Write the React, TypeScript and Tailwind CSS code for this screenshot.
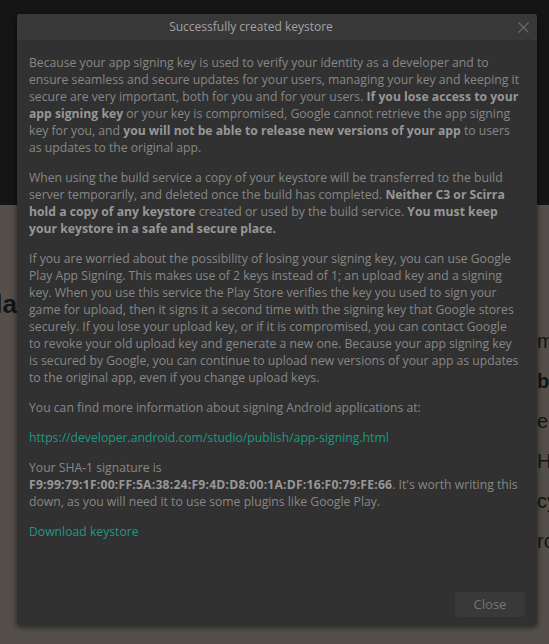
const font = { fontFamily: '"Open Sans", "Liberation Sans", sans-serif' };

const CloseIcon = () => (
  <svg viewBox="0 0 11 11" className="absolute right-[8px] top-[8px] w-[11px] h-[11px]">
    <path d="M0.5 0.5 L10.5 10.5 M10.5 0.5 L0.5 10.5" stroke="#686868" strokeWidth="1.3" fill="none" />
  </svg>
);

const KeystoreDialog = () => {
  return (
    <div
      className="absolute left-[17px] top-[14px] w-[520px] h-[611px] flex flex-col rounded-[3px] bg-[#313131] shadow-[0_2px_6px_rgba(0,0,0,0.6)]"
      style={font}
    >
      <div className="relative h-[26px] flex items-center justify-center pr-[52px] bg-[#383838] rounded-t-[3px]">
        <h2 className="text-[12px] text-[#a3a3a3]">Successfully created keystore</h2>
        <CloseIcon />
      </div>

      <div className="flex flex-col gap-[13px] px-3 pt-[14px] text-[12.2px] leading-[17px] text-[#878787] [&_b]:text-[#979797] [&_b]:font-bold">
        <p>
          Because your app signing key is used to verify your identity as a developer and to ensure seamless
          and secure updates for your users, managing your key and keeping it secure are very important, both
          for you and for your users. <b>If you lose access to your app signing key</b> or your key is
          compromised, Google cannot retrieve the app signing key for you, and{" "}
          <b>you will not be able to release new versions of your app</b> to users as updates to the original
          app.
        </p>
        <p>
          When using the build service a copy of your keystore will be transferred to the build server
          temporarily, and deleted once the build has completed. <b>Neither C3 or Scirra hold a copy of any
          keystore</b> created or used by the build service. <b>You must keep your keystore in a safe and secure
          place.</b>
        </p>
        <p>
          If you are worried about the possibility of losing your signing key, you can use Google Play App
          Signing. This makes use of 2 keys instead of 1; an upload key and a signing key. When you use this
          service the Play Store verifies the key you used to sign your game for upload, then it signs it a
          second time with the signing key that Google stores securely. If you lose your upload key, or if it
          is compromised, you can contact Google
          <br />
          to revoke your old upload key and generate a new one. Because your app signing key
          <br />
          is secured by Google, you can continue to upload new versions of your app as updates
          <br />
          to the original app, even if you change upload keys.
        </p>
        <p>You can find more information about signing Android applications at:</p>
        <p>
          <a href="#" className="text-[#1a9a82]">
            https://developer.android.com/studio/publish/app-signing.html
          </a>
        </p>
        <p>
          Your SHA-1 signature is <br />
          <b className="tracking-[0.2px]">F9:99:79:1F:00:FF:5A:38:24:F9:4D:D8:00:1A:DF:16:F0:79:FE:66</b>. It's
          worth writing this down, as you will need it to use some plugins like Google Play.
        </p>
        <p>
          <a href="#" className="text-[#1a9a82]">
            Download keystore
          </a>
        </p>
      </div>

      <div className="mt-auto flex justify-end px-3 pb-2">
        <button className="w-[70px] h-[25px] rounded-[3px] bg-[#393939] text-[13px] text-[#767676]">
          Close
        </button>
      </div>
    </div>
  );
};

export default function App() {
  return (
    <div className="relative w-[549px] h-[644px] overflow-hidden bg-[#545049]">
      <div className="h-[205px] bg-[#151515]" />
      <div className="flex justify-between" style={{ fontFamily: '"Liberation Sans", sans-serif' }}>
        <div className="w-[17px] overflow-hidden flex justify-end pt-[80px]">
          <span className="whitespace-nowrap text-[26px] font-bold text-[#141414]">Scala</span>
        </div>
        <div className="w-[12px] overflow-hidden flex flex-col pt-[116px] text-[20px] leading-[40px] text-[#141414]">
          <span className="whitespace-nowrap">more</span>
          <span className="whitespace-nowrap font-bold">b</span>
          <span className="whitespace-nowrap">e</span>
          <span className="whitespace-nowrap">H</span>
          <span className="whitespace-nowrap">cy</span>
          <span className="whitespace-nowrap">rc</span>
        </div>
      </div>
      <KeystoreDialog />
    </div>
  );
}
